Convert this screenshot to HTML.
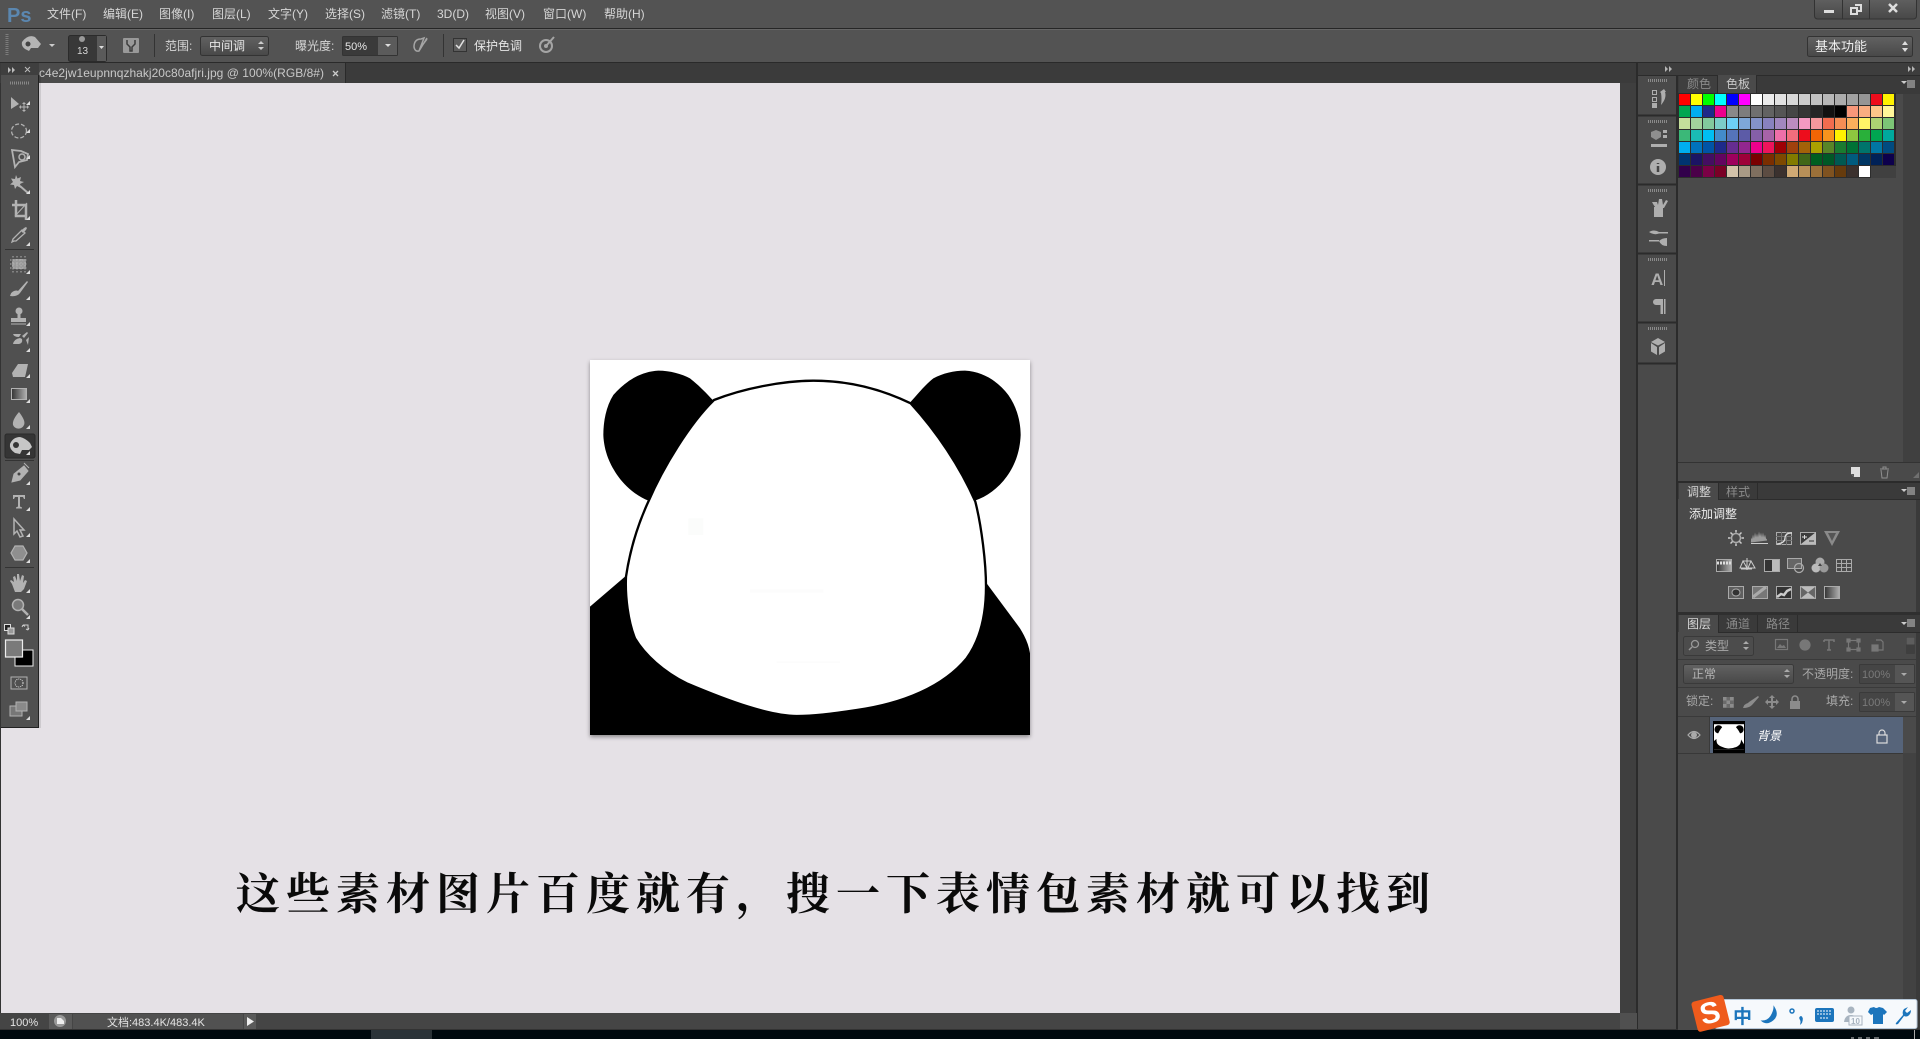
<!DOCTYPE html>
<html lang="zh"><head><meta charset="utf-8"><title>Photoshop</title>
<style>
html,body{margin:0;padding:0;background:#000;width:1920px;height:1039px;overflow:hidden}
svg{display:block;position:absolute;left:0;top:0}
text{font-family:"Liberation Sans","Noto Sans CJK SC",sans-serif;font-size:12px;fill:#d6d6d6}
.sw{position:absolute;left:1678px;top:93px;width:217px;display:flex;flex-wrap:wrap;background:#2c2c2c;padding:1px 0 0 1px;gap:1px;height:84px;align-content:flex-start}
.sw i{display:block;width:11px;height:11px}
</style></head><body>
<svg width="1920" height="1039" viewBox="0 0 1920 1039" xmlns="http://www.w3.org/2000/svg">
<defs>
<linearGradient id="btn" x1="0" y1="0" x2="0" y2="1"><stop offset="0" stop-color="#626262"/><stop offset="1" stop-color="#484848"/></linearGradient>
<linearGradient id="gr" x1="0" y1="0" x2="1" y2="0"><stop offset="0" stop-color="#333"/><stop offset="1" stop-color="#b0b0b0"/></linearGradient>
<filter id="sh" x="-5%" y="-5%" width="110%" height="110%"><feDropShadow dx="0" dy="2" stdDeviation="2" flood-color="#000" flood-opacity=".4"/></filter>
</defs>
<!-- base -->
<rect width="1920" height="1039" fill="#00090e"/>
<rect x="371" y="1030" width="61" height="9" fill="#2b3338"/>
<rect y="0" width="1920" height="28" fill="#535353"/>
<rect y="28" width="1920" height="1" fill="#262626"/><rect y="29" width="1920" height="1" fill="#666"/>
<rect y="30" width="1920" height="32" fill="#535353"/>
<rect y="62" width="1920" height="1" fill="#2a2a2a"/>
<rect y="63" width="1637" height="20" fill="#3b3b3b"/>
<rect x="39" y="63" width="306" height="20" fill="#4b4b4b"/>
<rect x="345" y="63" width="1" height="20" fill="#2a2a2a"/>
<!-- canvas -->
<rect x="1" y="83" width="1619" height="930" fill="#e5e1e6"/>
<rect x="1620" y="83" width="17" height="930" fill="#3f3f3f"/>
<rect x="0" y="83" width="1" height="947" fill="#333"/>
<!-- right side -->
<rect x="1636" y="63" width="284" height="967" fill="#4a4a4a"/>
<rect x="1636" y="63" width="2" height="967" fill="#2b2b2b"/>
<rect x="1638" y="63" width="282" height="12" fill="#3d3d3d"/>
<rect x="1638" y="75" width="282" height="1" fill="#2b2b2b"/>
<rect x="1676" y="75" width="2" height="955" fill="#2b2b2b"/>
<rect x="1678" y="76" width="242" height="18" fill="#3a3a3a"/>
<rect x="1903" y="94" width="17" height="368" fill="#404040"/>
<rect x="1903" y="753" width="13" height="277" fill="#424242"/>
<rect x="1916" y="481" width="4" height="549" fill="#3a3a3a"/>
<!-- panda -->
<rect x="590" y="360" width="440" height="375" fill="#fff" filter="url(#sh)"/>
<svg x="570" y="350" width="470" height="400" viewBox="0 0 1410 1200">
<path d="M430 152C405 125 385 105 360 85 335 72 300 62 265 62 210 65 165 95 130 135 108 170 100 215 100 255 102 305 120 345 145 380 170 415 205 440 235 452Z" fill="#000"/>
<path d="M1020 158C1045 130 1065 105 1090 85 1120 70 1150 62 1185 62 1240 65 1285 95 1315 135 1340 170 1352 215 1352 255 1350 305 1335 345 1310 380 1285 415 1250 440 1215 452Z" fill="#000"/>
<path d="M60 770L165 680 1250 700 1350 835Q1375 875 1380 910V1155H60Z" fill="#000"/>
<path d="M432 150C520 115 640 92 730 92 840 92 940 120 1022 160 1100 245 1170 350 1216 455 1235 530 1248 640 1248 710 1248 800 1230 870 1190 925 1120 1010 1000 1060 860 1080 780 1092 730 1098 680 1098 600 1098 480 1055 350 1000 280 965 225 915 195 865 175 815 165 740 168 680 180 600 205 520 235 455 280 350 360 220 432 150Z" fill="#fff" stroke="#000" stroke-width="7"/>
<rect x="355" y="505" width="45" height="50" fill="#fbfcfb"/>
<rect x="540" y="718" width="220" height="10" fill="#fcfcfc"/>
<rect x="620" y="934" width="190" height="5" fill="#fcfcfc"/>
</svg>
<!-- big text -->
<text x="236" y="909" style="font-family:'Liberation Serif','Noto Serif CJK SC',serif;font-size:44px;font-weight:700;fill:#0a0a0a;letter-spacing:6px">这些素材图片百度就有，搜一下表情包素材就可以找到</text>

<!-- menu -->
<text x="7" y="22" style="font-size:20px;font-weight:700;fill:#5b87b0">Ps</text>
<g>
<text x="47" y="18">文件(F)</text><text x="103" y="18">编辑(E)</text><text x="159" y="18">图像(I)</text><text x="212" y="18">图层(L)</text><text x="268" y="18">文字(Y)</text><text x="325" y="18">选择(S)</text><text x="381" y="18">滤镜(T)</text><text x="437" y="18">3D(D)</text><text x="485" y="18">视图(V)</text><text x="543" y="18">窗口(W)</text><text x="604" y="18">帮助(H)</text>
</g>
<!-- window buttons -->
<rect x="1814.5" y="-3" width="102" height="22" rx="3" fill="url(#btn)" stroke="#333"/>
<path d="M1842.5 0V19M1869.5 0V19" stroke="#333"/>
<rect x="1824" y="10" width="10" height="3" fill="#ddd"/>
<path d="M1851 8h6v6h-6zM1855 5h6v6h-4" fill="none" stroke="#ddd" stroke-width="2"/>
<path d="M1889 4l8 8m0-8l-8 8" stroke="#ddd" stroke-width="2.5"/>
<!-- options -->
<path d="M7 34V56" stroke="#7c7c7c" stroke-width="3" stroke-dasharray="1 1"/>
<path d="M22 42q6-8 13-5l6 7-3 4h-7l-2 3-4-2q-4-3-3-7z" fill="#b5b5b5"/><circle cx="28" cy="44" r="2.5" fill="#444"/>
<path d="M49 44h6l-3 3z" fill="#ccc"/>
<rect x="68.5" y="35.5" width="38" height="26" rx="2" fill="#383838" stroke="#2b2b2b"/><rect x="97" y="36" width="9" height="25" fill="#5a5a5a"/>
<path d="M99 46h5l-2.500 3z" fill="#ddd"/>
<circle cx="82" cy="39" r="3" fill="#999"/>
<text x="77" y="54" style="font-size:10px">13</text>
<rect x="123" y="38" width="16" height="15" rx="1" fill="#999"/><path d="M127 40v4l3 3v4h2v-4l3-3v-4" fill="none" stroke="#3c3c3c" stroke-width="1.500"/>
<path d="M154.500 34V57M443.500 34V57" stroke="#333"/>
<text x="165" y="50">范围:</text>
<rect x="200.500" y="36.500" width="68" height="19" rx="2" fill="url(#btn)" stroke="#333"/>
<text x="209" y="50" style="fill:#e6e6e6">中间调</text>
<path d="M258 44l3-3 3 3zM258 47l3 3 3-3z" fill="#ccc"/>
<text x="295" y="50">曝光度:</text>
<rect x="342.500" y="36.500" width="55" height="19" rx="1" fill="#3a3a3a" stroke="#333"/>
<rect x="378" y="37" width="19" height="18" fill="#5b5b5b"/><path d="M385 44h6l-3 3z" fill="#ddd"/>
<text x="345" y="50" style="font-size:11px;fill:#e6e6e6">50%</text>
<path d="M414 47q0-8 7-8l3-1-5 13q-4 1-5-4zM419 51l8-13M421 47l6-8" fill="none" stroke="#a5a5a5" stroke-width="1.500"/>
<rect x="453.500" y="38.500" width="13" height="13" fill="#5c5c5c" stroke="#333"/>
<path d="M456 45l3 3 5-8" fill="none" stroke="#e2e2e2" stroke-width="1.500"/>
<text x="474" y="50" style="fill:#e6e6e6">保护色调</text>
<circle cx="546" cy="46" r="6" fill="none" stroke="#a5a5a5" stroke-width="2"/><path d="M546 46l8-9" stroke="#a5a5a5" stroke-width="2"/><circle cx="546" cy="46" r="2" fill="#a5a5a5"/>
<!-- workspace -->
<rect x="1807.500" y="36.500" width="105" height="20" rx="2" fill="url(#btn)" stroke="#333"/>
<text x="1815" y="51" style="font-size:13px;fill:#efefef">基本功能</text>
<path d="M1902 45l3-4 3 4zM1902 48l3 4 3-4z" fill="#ddd"/>
<!-- tab -->
<text x="39" y="77" textLength="285" lengthAdjust="spacing" style="fill:#c8c8c8">c4e2jw1eupnnqzhakj20c80afjri.jpg @ 100%(RGB/8#)</text>
<path d="M333 71l5 5m0-5l-5 5" stroke="#ccc" stroke-width="1.300"/>

<!-- toolbar -->
<rect x="1" y="63" width="38" height="12" fill="#3f3f3f"/>
<rect x="1" y="75" width="37" height="652" fill="#505050"/>
<rect x="38" y="75" width="1" height="652" fill="#222"/>
<rect x="39" y="75" width="2" height="653" fill="#000" opacity=".1"/>
<rect x="1" y="727" width="38" height="1" fill="#222"/>
<path d="M8 67l3 3-3 3zM12 67l3 3-3 3z" fill="#bbb"/><path d="M25 67l5 5m0-5l-5 5" stroke="#bbb"/>
<path d="M10 83H29" stroke="#888" stroke-width="3" stroke-dasharray="1 1"/>
<path d="M5 249.500H34M5 460.500H34M5 567.500H34" stroke="#333"/>
<rect x="5" y="434" width="30" height="24" rx="2" fill="#353535" stroke="#2a2a2a"/>
<g fill="#b2b2b2" stroke="none">
<path d="M11 97l8 7-8 5z"/><path d="M24 102l-2 2h1.500v2.500H21V105l-2 2 2 2v-1.500h2.500V110H22l2 2 2-2h-1.500v-2.500H27V109l2-2-2-2v1.500h-2.500V104H26z"/>
<ellipse cx="19" cy="131" rx="7.500" ry="7" fill="none" stroke="#b2b2b2" stroke-width="1.300" stroke-dasharray="4 2"/>
<path d="M12 150l9 1 7 3-1 6-8 2-4 5z" fill="none" stroke="#b2b2b2" stroke-width="1.800"/><circle cx="22" cy="157" r="3" fill="none" stroke="#b2b2b2" stroke-width="1.500"/>
<path d="M16 175l1.500 3.500 3.500-1.500-1 4 4 1-4 2 1 4-4-2-2 3-1-4-4-.5 3-2.500-2-3.500 4 .5z"/><path d="M20 186l8 7" stroke="#b2b2b2" stroke-width="2"/>
<path d="M16 200v16h11M12 205h14v15" fill="none" stroke="#b2b2b2" stroke-width="2.500"/><path d="M15 216l12-13" stroke="#b2b2b2"/>
<path d="M14 241l-2 1 1-3 9-9 3 3-9 8z" fill="none" stroke="#b2b2b2" stroke-width="1.300"/><path d="M21 231l3-3 2-1 1 1-1 2-3 3z"/>
<rect x="12" y="259" width="14" height="10" rx="3" fill="#999"/><path d="M13 256v17M17 256v17M21 256v17M25 256v17M10 260h18M10 264h18M10 268h18" stroke="#b2b2b2" stroke-dasharray="1.500 1.500" fill="none"/>
<path d="M10 296q1-4 4-5 3-1 4 0l9-10 1 1-8 11q-3 4-10 3z"/>
<circle cx="19" cy="311" r="3.500"/><rect x="17.500" y="313" width="3" height="5"/><rect x="11" y="318" width="15" height="4"/><rect x="11" y="323.500" width="15" height="1"/>
<path d="M13 334h8l-2 3q-5 0-6-3zM13 344q1-5 7-6l2 1q1 4-3 5zM22 336l5-4 1 1-4 5zM26 340l3-3-1 8z"/>
<path d="M12 373l6-9h10l-2 9zM12 373l1 4h12l1-4z"/>
<rect x="11.500" y="388.500" width="15" height="11" fill="url(#gr)" stroke="#b2b2b2"/>
<path d="M19 412q7 9 5 13a6 6 0 0 1-11 0q-1-5 6-13z"/>
<path d="M10 444q3-7 10-7 5 1 10 6l2 4-3 3h-7l-2 4-5-1q-6-4-5-9z" fill="#c6c6c6"/><circle cx="16" cy="445" r="3" fill="#353535"/>
<path d="M12 482l2-8 10-8 4 5-8 9zM24 463l5 5" fill="#b2b2b2" stroke="#b2b2b2"/><circle cx="19" cy="474" r="1.500" fill="#444"/>
<path d="M13 495h12v4h-1l-1-2h-3v9.500l2 1v1h-6v-1l2-1V497h-3l-1 2h-1z"/>
<path d="M14 519v15l3-3 3 6 3-1-3-6h4z" fill="none" stroke="#b2b2b2" stroke-width="1.500"/>
<path d="M15 546h8l4 7-4 7h-8l-4-7z" fill="#8f8f8f" stroke="#b2b2b2" stroke-width="1.200"/>
<path d="M12 584l-2-3 1-1 3 2-1-5 2-1 2 5 0-7 2 0 1 7 2-6 2 1-1 7 2-3 2 1-3 8-3 3h-6z"/>
<circle cx="18" cy="605" r="5.500" fill="#7a7a7a" stroke="#b2b2b2" stroke-width="1.500"/><path d="M22 609l6 6" stroke="#b2b2b2" stroke-width="2.500"/>
<rect x="4.500" y="624.500" width="6" height="6" fill="#222" stroke="#ddd"/><rect x="8" y="628" width="6" height="6" fill="#999" stroke="#ddd"/>
<path d="M23 625l5 0 0 5m-5-5l-1 2m1-2l2 1.500M28 630l-2-1m2 1l1-2" fill="none" stroke="#ccc"/>
</g>
<rect x="15" y="650" width="18" height="16" fill="#000" stroke="#eee" stroke-width="1"/>
<rect x="5.500" y="640" width="17" height="17" fill="#7a7a7a" stroke="#eee" stroke-width="1.200"/>
<rect x="11" y="677" width="16" height="12" fill="none" stroke="#b2b2b2"/><circle cx="19" cy="683" r="4" fill="none" stroke="#ddd" stroke-dasharray="1 1"/>
<rect x="10" y="706" width="12" height="10" fill="#777" stroke="#b2b2b2"/><rect x="16" y="702" width="11" height="9" fill="#8a8a8a" stroke="#b2b2b2"/>
<path d="M30 101v4h-4zM30 129v4h-4zM30 155v4h-4zM30 190v4h-4zM30 216v4h-4zM30 242v4h-4zM30 270v4h-4zM30 296v4h-4zM30 322v4h-4zM30 348v4h-4zM30 374v4h-4zM30 399v4h-4zM30 425v4h-4zM30 451v4h-4zM30 481v4h-4zM30 507v4h-4zM30 533v4h-4zM30 559v4h-4zM30 589v4h-4zM30 615v4h-4zM30 716v4h-4z" fill="#ddd"/>

<!-- dock -->
<path d="M1668 69l-3 -3v6zM1672 69l-3-3v6z" fill="#b5b5b5"/>
<path d="M1908 66l3 3-3 3zM1912 66l3 3-3 3z" fill="#b5b5b5"/>
<path d="M1638 115.500H1676M1638 184.500H1676M1638 253.500H1676M1638 322.500H1676M1638 363.500H1676" stroke="#2b2b2b" stroke-width="2"/>
<path d="M1648 80.500H1667M1648 121.500H1667M1648 190.500H1667M1648 259.500H1667M1648 328.500H1667" stroke="#8a8a8a" stroke-width="3" stroke-dasharray="1 1"/>
<g fill="#aeaeae">
<rect x="1652.500" y="90.500" width="4" height="4" fill="none" stroke="#aeaeae"/><rect x="1652.500" y="97.500" width="4" height="4" fill="none" stroke="#aeaeae"/><rect x="1652" y="103" width="5" height="5"/>
<path d="M1660 92l4-3 2 3-1 0q2 6-4 13 1-6 0-12z"/>
<path d="M1651 132l5-2 5 2v5l-5 3-5-3z" fill="#8f8f8f"/><rect x="1663" y="130" width="4" height="3"/><rect x="1663" y="135" width="4" height="3"/><rect x="1651" y="144" width="16" height="3"/>
<circle cx="1658" cy="167" r="8"/>
<path d="M1652 202l5 0 1 3 1-6h3l1 6 3-5 2 1-4 7h-8q-2-2-4-6z"/><rect x="1654" y="207" width="9" height="10"/>
<path d="M1649 232q5-3 10 0h9v1.500h-9q-5 2-10-1.500zM1649 240h10v1.500h-10zM1659 241q3-3 8-3v8q-6 0-8-5z"/>
<text x="1651" y="285" style="font-size:17px;fill:#aeaeae;font-weight:700">A</text><rect x="1664" y="270" width="1" height="16"/>
<path d="M1656 299h7v15h-2.500v-9h-4.500a3 3 0 0 1 0-6z"/><rect x="1664" y="299" width="1.500" height="15"/>
<path d="M1651 342l7-4 7 4-7 3.500zM1651 343l6 4v8l-6-3.500zM1665 343l-6 4v8l6-3.500z"/>
</g>
<path d="M1658 163v1M1658 166v6" stroke="#444" stroke-width="2.500"/>

<!-- swatches tabs -->
<rect x="1679" y="76" width="38" height="17" fill="#3f3f3f"/>
<rect x="1718" y="75" width="38" height="19" fill="#4a4a4a"/>
<path d="M1717.500 75V93M1756.500 75V93" stroke="#2c2c2c"/>
<text x="1687" y="88" style="fill:#8a8a8a">颜色</text>
<text x="1726" y="88" style="fill:#c8c8c8">色板</text>
<path d="M1901 81h6l-3 3z" fill="#ccc"/><path d="M1907 81h8M1907 83h8M1907 85h8M1907 87h8" stroke="#ccc"/>
<!-- panel bottom strip -->
<rect x="1678" y="462" width="242" height="1" fill="#333"/><rect x="1678" y="481" width="242" height="2" fill="#2b2b2b"/>
<path d="M1851 467h9v10h-6l-3-3z" fill="#ddd"/><path d="M1851 474l3 0 0 3z" fill="#555"/>
<path d="M1880 469h9M1883 469v-2h3v2M1881 470l1 8h5l1-8" fill="none" stroke="#909090"/>
<path d="M1913 478h6v-6z" fill="#8a8a8a" opacity=".6"/>
<!-- adjustments -->
<rect x="1678" y="483" width="242" height="16" fill="#3a3a3a"/>
<rect x="1679" y="483" width="39" height="17" fill="#4a4a4a"/><path d="M1718.500 483V499M1757.500 483V499" stroke="#2c2c2c"/>
<rect x="1718" y="499" width="202" height="1" fill="#2c2c2c"/>
<text x="1687" y="496" style="fill:#d6d6d6">调整</text><text x="1726" y="496" style="fill:#8a8a8a">样式</text>
<path d="M1901 489h6l-3 3z" fill="#ccc"/><path d="M1907 488h8M1907 490h8M1907 492h8M1907 494h8" stroke="#ccc"/>
<text x="1689" y="518" style="fill:#ececec">添加调整</text>
<g fill="none" stroke="#aaa">
<circle cx="1736" cy="538" r="4.500" stroke-width="1.500"/><path d="M1736 530v2.500M1736 543.500v2.500M1728 538h2.500M1741.500 538h2.500M1730.500 532.500l2 2M1739.500 541.500l2 2M1741.500 532.500l-2 2M1732.500 541.500l-2 2" stroke="#ccc" stroke-width="1.500"/>
<path d="M1751 542.500v-5l1 2 1-5 1 4 1-6 1 5 1-4 1 4 1-6 1 5 1-4 1 5 1-5 1 5 1-3 1 4 1 1v1z" fill="#9a9a9a" stroke="none"/><path d="M1751 543.500h17" stroke="#ccc"/>
<rect x="1776.500" y="532.500" width="15" height="12"/><path d="M1781.500 532v13M1786.500 532v13M1776 536.500h16M1776 540.500h16" stroke="#777"/><path d="M1777 544q8-1 8-6t7-5" stroke="#ddd" stroke-width="1.300"/>
<rect x="1800.500" y="532.500" width="15" height="12" fill="#3d3d3d"/><path d="M1801 544l15-12v12z" fill="#bbb" stroke="none"/><path d="M1802 537h5M1804.500 535v4" stroke="#ddd"/><path d="M1809 541h5" stroke="#333"/>
</g>
<path d="M1824 531h16l-8 15z" fill="#8a8a8a"/><path d="M1828 533h8l-4 8z" fill="#555"/>
<g fill="none" stroke="#aaa">
<rect x="1716.500" y="559.500" width="15" height="12" fill="url(#gr)"/><path d="M1717 563h15" stroke="#ddd" stroke-dasharray="2 1" stroke-width="3"/>
<path d="M1747 558v12M1743 561h8M1743 561l-3 7h7zM1751 561l-3 7h7z" stroke="#ccc"/><path d="M1741 569h11" stroke="#ccc"/>
<rect x="1764.500" y="559.500" width="15" height="12"/><rect x="1772" y="560" width="7" height="11" fill="#bbb" stroke="none"/><rect x="1765" y="560" width="7" height="11" fill="#333" stroke="none"/>
<rect x="1787.500" y="558.500" width="14" height="10" fill="#666"/><circle cx="1799" cy="568" r="4.500" stroke-width="1.300"/>
<circle cx="1820" cy="562" r="4.500" fill="#aaa" stroke="none"/><circle cx="1816" cy="568" r="4.500" fill="#bbb" stroke="none"/><circle cx="1824" cy="568" r="4.500" fill="#999" stroke="none"/><path d="M1820 563l-2 3h4z" fill="#444" stroke="none"/>
<rect x="1836.500" y="559.500" width="15" height="12"/><path d="M1841.500 559v13M1846.500 559v13M1836 563.500h16M1836 567.500h16"/>
<rect x="1728.500" y="586.500" width="15" height="12" fill="#5f5f5f"/><ellipse cx="1736" cy="592.500" rx="4" ry="3.500" fill="#333"/>
<rect x="1752.500" y="586.500" width="15" height="12" fill="#777"/><path d="M1753 597l13-10" stroke="#aaa" stroke-width="3"/>
<rect x="1776.500" y="586.500" width="15" height="12" fill="#333"/><path d="M1777 597l4-3 3 1 3-4 4-2" stroke="#ccc" stroke-width="2.500"/>
<rect x="1800.500" y="586.500" width="15" height="12" fill="#bbb"/><path d="M1801 587l14 11v-11l-14 11z" fill="#666" stroke="none"/>
<rect x="1824.500" y="586.500" width="15" height="12" fill="url(#gr)"/>
</g>
<rect x="1678" y="612" width="242" height="3" fill="#2f2f2f"/>
<!-- layers -->
<rect x="1678" y="615" width="242" height="17" fill="#3a3a3a"/>
<rect x="1679" y="615" width="39" height="18" fill="#4a4a4a"/><path d="M1718.500 615V632M1757.500 615V632M1797.500 615V632" stroke="#2c2c2c"/>
<rect x="1718" y="632" width="202" height="1" fill="#2c2c2c"/>
<text x="1687" y="628" style="fill:#d6d6d6">图层</text><text x="1726" y="628" style="fill:#8a8a8a">通道</text><text x="1766" y="628" style="fill:#8a8a8a">路径</text>
<path d="M1901 622h6l-3 3z" fill="#ccc"/><path d="M1907 620h8M1907 622h8M1907 624h8M1907 626h8" stroke="#ccc"/>
<rect x="1683.500" y="636.500" width="70" height="19" rx="2" fill="#4c4c4c" stroke="#3a3a3a"/>
<circle cx="1695" cy="644" r="3.500" fill="none" stroke="#999" stroke-width="1.300"/><path d="M1692 647l-3 3" stroke="#999" stroke-width="1.500"/>
<text x="1705" y="650" style="fill:#a8a8a8">类型</text>
<path d="M1743 644l3-3 3 3zM1743 647l3 3 3-3z" fill="#aaa"/>
<g fill="none" stroke="#777" stroke-width="1.200">
<rect x="1775.500" y="639.500" width="12" height="10"/><path d="M1777 648l3-4 2 2 2-1 2 3z" fill="#777" stroke="none"/>
<circle cx="1805" cy="645" r="5" fill="#777"/>
<path d="M1824 640h10v2M1829 640v10M1827 650h4M1824 640v2" stroke-width="1.500"/>
<rect x="1848.500" y="640.500" width="10" height="9"/><rect x="1847" y="639" width="3" height="3" fill="#777"/><rect x="1857" y="639" width="3" height="3" fill="#777"/><rect x="1847" y="648" width="3" height="3" fill="#777"/><rect x="1857" y="648" width="3" height="3" fill="#777"/>
<path d="M1876 640h5l2 2v8h-5"/><rect x="1872" y="645" width="6" height="6" fill="#777"/>
</g>
<rect x="1906" y="637" width="9" height="17" rx="1" fill="#3f3f3f"/><rect x="1906.500" y="637.500" width="8" height="7" fill="#5d5d5d"/>
<rect x="1678" y="659" width="242" height="1" fill="#3a3a3a"/>
<rect x="1683.500" y="664.500" width="110" height="19" rx="2" fill="url(#btn)" stroke="#3a3a3a"/>
<text x="1692" y="678" style="fill:#b5b5b5">正常</text>
<path d="M1784 672l3-3 3 3zM1784 675l3 3 3-3z" fill="#aaa"/>
<text x="1802" y="678" style="fill:#a8a8a8">不透明度:</text>
<rect x="1859.500" y="664.500" width="55" height="19" rx="1" fill="#454545" stroke="#3a3a3a"/>
<rect x="1895" y="665" width="19" height="18" fill="#555"/><path d="M1901 673h6l-3 3z" fill="#aaa"/>
<text x="1862" y="678" style="font-size:11px;fill:#7a7a7a">100%</text>
<rect x="1678" y="687" width="242" height="1" fill="#3a3a3a"/>
<text x="1686" y="705" style="fill:#a8a8a8">锁定:</text>
<path d="M1723 697h11v11h-11z" fill="#6a6a6a"/><path d="M1723 697h3.500v3.500h-3.500zM1730 697h3.500v3.500h-3.500zM1726.500 700.500h3.500v3.500h-3.500zM1723 704h3.500v3.500h-3.500zM1730 704h3.500v3.500h-3.500z" fill="#8c8c8c"/>
<path d="M1743 708q1-4 5-5l1-1 9-6 1 1-7 8q-3 3-9 3z" fill="#8c8c8c"/>
<path d="M1772 695l3 3h-2v3h3v-2l3 3-3 3v-2h-3v3h2l-3 3-3-3h2v-3h-3v2l-3-3 3-3v2h3v-3h-2z" fill="#8c8c8c"/>
<rect x="1790" y="701" width="10" height="8" fill="#8c8c8c"/><path d="M1792 701v-2a3 3 0 0 1 6 0v2" fill="none" stroke="#8c8c8c" stroke-width="1.500"/>
<text x="1826" y="705" style="fill:#a8a8a8">填充:</text>
<rect x="1859.500" y="692.500" width="55" height="19" rx="1" fill="#454545" stroke="#3a3a3a"/>
<rect x="1895" y="693" width="19" height="18" fill="#555"/><path d="M1901 701h6l-3 3z" fill="#aaa"/>
<text x="1862" y="706" style="font-size:11px;fill:#7a7a7a">100%</text>
<rect x="1678" y="716" width="242" height="1" fill="#3a3a3a"/>
<!-- layer row -->
<rect x="1678" y="717" width="31" height="36" fill="#4a4a4a"/>
<rect x="1709" y="717" width="1" height="36" fill="#3a3a3a"/>
<rect x="1710" y="717" width="193" height="36" fill="#56647a"/>
<rect x="1678" y="753" width="225" height="1" fill="#383838"/>
<path d="M1688 735q6-7 12 0-6 7-12 0z" fill="none" stroke="#aaa" stroke-width="1.200"/><circle cx="1694" cy="735" r="3" fill="#aaa"/>
<rect x="1713" y="721" width="32" height="32" fill="#000"/>
<svg x="1714" y="722" width="30" height="30" viewBox="60 30 1320 1125">
<rect x="60" y="30" width="1320" height="1125" fill="#fff"/>
<circle cx="262" cy="255" r="180" fill="#000"/><circle cx="1185" cy="255" r="180" fill="#000"/>
<path d="M60 770L165 680 1250 700 1380 910V1155H60Z" fill="#000"/>
<path d="M432 150C520 115 640 92 730 92 840 92 940 120 1022 160 1100 245 1170 350 1216 455 1235 530 1248 640 1248 710 1248 800 1230 870 1190 925 1120 1010 1000 1060 860 1080 780 1092 730 1098 680 1098 600 1098 480 1055 350 1000 280 965 225 915 195 865 175 815 165 740 168 680 180 600 205 520 235 455 280 350 360 220 432 150Z" fill="#fff"/>
</svg>
<text x="1757" y="740" style="fill:#fff;font-style:italic;font-size:12px">背景</text>
<rect x="1877" y="735" width="10" height="8" fill="none" stroke="#ddd" stroke-width="1.200"/><path d="M1879 735v-2a3 3 0 0 1 6 0v2" fill="none" stroke="#ddd" stroke-width="1.200"/>

<!-- status bar -->
<rect y="1013" width="1620" height="17" fill="#454545"/>
<rect x="1620" y="1013" width="17" height="17" fill="#505050"/>
<rect x="0" y="1029" width="1920" height="1" fill="#333"/>
<rect x="1678" y="1011" width="24" height="19" fill="#4a4a4a"/>
<rect x="49" y="1014" width="23" height="15" fill="#5a5a5a"/>
<rect x="73" y="1014" width="170" height="15" fill="#515151"/>
<rect x="244" y="1014" width="12" height="15" fill="#5a5a5a"/>
<text x="10" y="1026" style="font-size:11px;fill:#e4e4e4">100%</text>
<circle cx="60" cy="1021" r="6" fill="#999"/><path d="M57 1018h4l3 3v3h-7z" fill="#eee"/>
<text x="107" y="1026" style="font-size:11px;fill:#e4e4e4">文档:483.4K/483.4K</text>
<path d="M247 1017v9l7-4.500z" fill="#eee"/>
<!-- taskbar bits -->
<path d="M1914.500 1030V1039" stroke="#aaa"/>
<path d="M1851 1038h3M1858 1038h4M1866 1038h4M1874 1038h5" stroke="#ccc"/>
<!-- IME -->
<rect x="1715" y="999.500" width="202" height="29" rx="2" fill="#f6f9fc" stroke="#b6c7d8"/>
<g transform="rotate(-14 1710 1013)"><rect x="1694" y="998" width="33" height="31" rx="3" fill="#ef5b1c"/>
<text x="1710" y="1023" text-anchor="middle" style="font-size:30px;font-weight:700;fill:#fff">S</text></g>
<text x="1733" y="1023" style="font-size:19px;font-weight:700;fill:#1c75bc">中</text>
<path d="M1774 1007q5 8-1 13t-11 1q6 0 9-5t3-9z" fill="#1c75bc" stroke="#1c75bc"/>
<circle cx="1792" cy="1011" r="2" fill="none" stroke="#1c75bc" stroke-width="1.500"/>
<path d="M1801 1016q3 1 1 7l-2 2q1-4 0-5-2-3 1-4z" fill="#1c75bc"/>
<rect x="1815" y="1008" width="19" height="14" rx="2" fill="#1c75bc"/>
<path d="M1817 1011h15M1817 1014h15M1820 1018h9" stroke="#fff" stroke-dasharray="2 1"/>
<circle cx="1851" cy="1010" r="3.500" fill="#a8b4c0"/><path d="M1844 1022q1-7 7-7t7 7z" fill="#a8b4c0"/>
<rect x="1849" y="1016" width="13" height="9" fill="#f6f9fc" stroke="#a8b4c0"/><text x="1851" y="1024" style="font-size:8px;font-weight:700;fill:#a8b4c0">10</text>
<path d="M1870 1008l4-1q2 2 5 0l4 1 4 4-3 3-1-1v10h-10v-10l-2 1-3-3z" fill="#1c75bc"/>
<path d="M1896 1023l7-8q-1-4 1-6l4-2-3 4 2 2 4-3q0 4-3 6-2 1-4 0l-6 8q-3 1-2-1z" fill="#1c75bc"/>
</svg>
<div class="sw">
<i style="background:#f00"></i><i style="background:#ff0"></i><i style="background:#0f0"></i><i style="background:#0ff"></i><i style="background:#00f"></i><i style="background:#f0f"></i><i style="background:#fff"></i><i style="background:#ebebeb"></i><i style="background:#e1e1e1"></i><i style="background:#d7d7d7"></i><i style="background:#ccc"></i><i style="background:#c2c2c2"></i><i style="background:#b7b7b7"></i><i style="background:#acacac"></i><i style="background:#a1a1a1"></i><i style="background:#959595"></i><i style="background:#ed0d1c"></i><i style="background:#fff200"></i>
<i style="background:#00a651"></i><i style="background:#00aeef"></i><i style="background:#1e2a8a"></i><i style="background:#ec008c"></i><i style="background:#898989"></i><i style="background:#7d7d7d"></i><i style="background:#707070"></i><i style="background:#626262"></i><i style="background:#555"></i><i style="background:#464646"></i><i style="background:#363636"></i><i style="background:#262626"></i><i style="background:#111"></i><i style="background:#000"></i><i style="background:#f7977a"></i><i style="background:#f9ad81"></i><i style="background:#fdc68a"></i><i style="background:#fff79a"></i>
<i style="background:#c4df9b"></i><i style="background:#a2d39c"></i><i style="background:#82ca9d"></i><i style="background:#7bcdc8"></i><i style="background:#6ecff6"></i><i style="background:#7ea7d8"></i><i style="background:#8493ca"></i><i style="background:#8882be"></i><i style="background:#a187be"></i><i style="background:#bc8dbf"></i><i style="background:#f49ac2"></i><i style="background:#f6989d"></i><i style="background:#f26c4f"></i><i style="background:#f68e55"></i><i style="background:#fbaf5c"></i><i style="background:#fff467"></i><i style="background:#acd372"></i><i style="background:#7cc576"></i>
<i style="background:#3bb878"></i><i style="background:#1abbb4"></i><i style="background:#00bff3"></i><i style="background:#438cca"></i><i style="background:#5574b9"></i><i style="background:#5c5ba7"></i><i style="background:#855fa8"></i><i style="background:#a763a8"></i><i style="background:#ee6fa9"></i><i style="background:#f26d7d"></i><i style="background:#ed0d1c"></i><i style="background:#f26505"></i><i style="background:#f7941d"></i><i style="background:#fff200"></i><i style="background:#8dc63f"></i><i style="background:#29b03a"></i><i style="background:#00a651"></i><i style="background:#00a99d"></i>
<i style="background:#00aeef"></i><i style="background:#0072bc"></i><i style="background:#0054a6"></i><i style="background:#1e2a8a"></i><i style="background:#662d91"></i><i style="background:#92278f"></i><i style="background:#ec008c"></i><i style="background:#ed145b"></i><i style="background:#9e0005"></i><i style="background:#a0410d"></i><i style="background:#a36209"></i><i style="background:#aba000"></i><i style="background:#598527"></i><i style="background:#1a7b30"></i><i style="background:#007236"></i><i style="background:#00746b"></i><i style="background:#0076a3"></i><i style="background:#004b80"></i>
<i style="background:#003471"></i><i style="background:#1b1464"></i><i style="background:#440e62"></i><i style="background:#630460"></i><i style="background:#9e005d"></i><i style="background:#9e0039"></i><i style="background:#790000"></i><i style="background:#7b2e00"></i><i style="background:#7d4900"></i><i style="background:#827b00"></i><i style="background:#406618"></i><i style="background:#005e20"></i><i style="background:#005826"></i><i style="background:#005952"></i><i style="background:#005b7f"></i><i style="background:#003663"></i><i style="background:#002157"></i><i style="background:#0d004c"></i>
<i style="background:#32004b"></i><i style="background:#4b0049"></i><i style="background:#7b0046"></i><i style="background:#7a0026"></i><i style="background:#d3c3aa"></i><i style="background:#a99a85"></i><i style="background:#7f6f5f"></i><i style="background:#5c4c42"></i><i style="background:#3b312e"></i><i style="background:#d0a974"></i><i style="background:#b78f58"></i><i style="background:#9b7039"></i><i style="background:#7f5220"></i><i style="background:#663b0d"></i><i style="background:#3b312e"></i><i style="background:#fff"></i><i style="background:#4a4a4a;width:12px;margin-right:-1px"></i><i style="background:#4a4a4a;width:12px"></i>
</div>
<div style="position:absolute;left:1871px;top:166px;width:25px;height:12px;background:#404040"></div>
</body></html>
